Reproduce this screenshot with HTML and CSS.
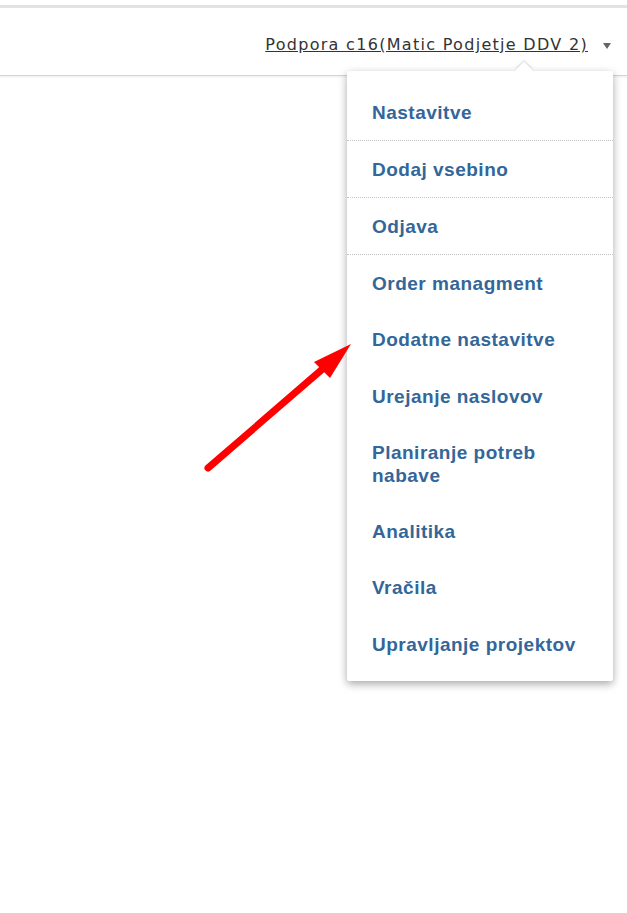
FILE: index.html
```
<!DOCTYPE html>
<html lang="sl">
<head>
    <meta charset="UTF-8">
    <meta name="viewport" content="width=device-width, initial-scale=1.0">
    <title>Uporabniški meni</title>
    <link rel="stylesheet" href="styles.css">
</head>
<body>

    <div class="page">
        <div class="header">
            <a class="user-link" href="#">Podpora c16(Matic Podjetje DDV 2)</a>
            <span class="caret"></span>
        </div>

        <div class="dropdown">
            <span class="notch"></span>
            <ul class="menu">
                <li class="sep"><a href="#">Nastavitve</a></li>
                <li class="sep"><a href="#">Dodaj vsebino</a></li>
                <li class="sep"><a href="#">Odjava</a></li>
                <li><a href="#">Order managment</a></li>
                <li><a href="#">Dodatne nastavitve</a></li>
                <li><a href="#">Urejanje naslovov</a></li>
                <li><a href="#">Planiranje potreb nabave</a></li>
                <li><a href="#">Analitika</a></li>
                <li><a href="#">Vračila</a></li>
                <li><a href="#">Upravljanje projektov</a></li>
            </ul>
        </div>

        <svg class="annotation" width="627" height="913" viewBox="0 0 627 913">
            <line x1="208" y1="468" x2="326" y2="366" stroke="#ff0000" stroke-width="7" stroke-linecap="round"/>
            <polygon points="351,344 314,362 330,378" fill="#ff0000"/>
        </svg>
    </div>

</body>
</html>
```

FILE: styles.css
```
body {
    margin: 0;
    background: #fff;
}

.page {
    position: relative;
    width: 627px;
    height: 913px;
    padding-top: 5px;
    box-sizing: border-box;
    overflow: hidden;
}

.header {
    display: flex;
    justify-content: flex-end;
    align-items: flex-start;
    height: 71px;
    padding: 28px 16px 0 0;
    box-sizing: border-box;
    border-top: 3px solid #e3e3e3;
    border-bottom: 1px solid #d4d4d4;
    box-shadow: 0 1px 2px rgba(0, 0, 0, 0.08);
    background: #fff;
}

.user-link {
    font-family: "DejaVu Sans", Verdana, sans-serif;
    font-size: 16px;
    letter-spacing: 1.3px;
    line-height: 18px;
    color: #333;
    text-decoration: underline;
}

.caret {
    width: 0;
    height: 0;
    margin: 7px 0 0 15px;
    border-left: 4px solid transparent;
    border-right: 4px solid transparent;
    border-top: 6px solid #666;
}

.dropdown {
    position: absolute;
    top: 71px;
    right: 14px;
    width: 266px;
    background: #fff;
    border-radius: 3px;
    box-shadow: 0 3px 8px rgba(0, 0, 0, 0.35);
}

.notch {
    position: absolute;
    top: -7px;
    left: 171px;
    width: 12px;
    height: 12px;
    background: #fff;
    transform: rotate(45deg);
    box-shadow: -1px -1px 2px rgba(0, 0, 0, 0.15);
}

.menu {
    position: relative;
    list-style: none;
    margin: 0;
    padding: 13px 0 9px;
    background: #fff;
    border-radius: 3px;
}

.menu li {
    padding: 17px 25px 16px;
}

.menu li.sep {
    border-bottom: 1px dotted #c4c4c4;
}

.menu li.sep + li:not(.sep) {
    padding-top: 17px;
}

.menu li:not(.sep) + li {
    padding-top: 17.3px;
}

.menu a {
    display: block;
    font-family: "Liberation Sans", Arial, sans-serif;
    font-weight: bold;
    font-size: 19px;
    letter-spacing: 0.5px;
    line-height: 23px;
    color: #336699;
    text-decoration: none;
}

.annotation {
    position: absolute;
    top: 0;
    left: 0;
    pointer-events: none;
}
```
